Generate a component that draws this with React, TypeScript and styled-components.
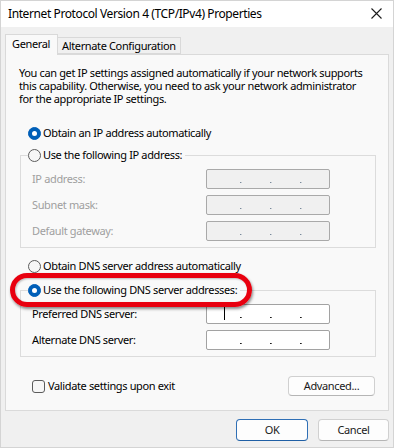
import React from "react";
import styled, { createGlobalStyle } from "styled-components";

const Global = createGlobalStyle`
  html, body { margin: 0; padding: 0; background: #f0f0f0; }
  body {
    font-family: "Segoe UI", "Noto Sans", sans-serif;
    font-size: 11px;
    letter-spacing: -0.36px;
    color: #000;
  }
  * { box-sizing: border-box; }
`;

const Window = styled.div`
  width: 394px;
  height: 448px;
  background: #f0f0f0;
  border: 1px solid #d4d4d4;
  display: flex;
  flex-direction: column;
  overflow: hidden;
`;

const TitleBar = styled.div`
  height: 26px;
  background: #ffffff;
  display: flex;
  align-items: center;
  justify-content: space-between;
  padding: 0 11px 2px 7px;
  font-size: 12px;
  letter-spacing: -0.4px;
  white-space: nowrap;
`;

const TabStrip = styled.div`
  display: flex;
  align-items: flex-end;
  margin-top: 7px;
  padding-left: 4px;
  position: relative;
  z-index: 1;
`;

const Tab = styled.div<{ $active?: boolean }>`
  height: ${(p) => (p.$active ? 21 : 17)}px;
  padding: ${(p) => (p.$active ? "2px 7px 0 6px" : "1px 4px 0 4px")};
  margin-bottom: ${(p) => (p.$active ? -1 : 0)}px;
  background: ${(p) => (p.$active ? "#f9f9f9" : "#f0f0f0")};
  border: 1px solid #d9d9d9;
  border-bottom: ${(p) => (p.$active ? "none" : "1px solid #d9d9d9")};
  ${(p) => (p.$active ? "" : "border-left: none;")}
  line-height: 14px;
  white-space: nowrap;
`;

const Panel = styled.div`
  position: relative;
  height: 357px;
  margin: 0 4px 0 4px;
  background: #f9f9f9;
  border: 1px solid #dadada;
  padding: 11px 12px 0 13px;
  display: flex;
  flex-direction: column;
`;

const Description = styled.div`
  line-height: 13px;
  white-space: nowrap;
`;

const RadioRow = styled.label<{ $mt?: number }>`
  display: flex;
  align-items: center;
  height: 14px;
  line-height: 14px;
  margin-top: ${(p) => p.$mt ?? 0}px;
  margin-left: ${(p) => (p.$mt !== undefined ? 9 : 0)}px;
  white-space: nowrap;
`;

const RadioCircle = styled.span<{ $checked?: boolean }>`
  width: 13px;
  height: 13px;
  border-radius: 50%;
  flex: none;
  margin-right: 2px;
  box-sizing: border-box;
  display: flex;
  align-items: center;
  justify-content: center;
  background: ${(p) => (p.$checked ? "#005fb8" : "#f7f7f7")};
  border: 1px solid ${(p) => (p.$checked ? "#005fb8" : "#5c5c5c")};
  &::after {
    content: "";
    display: ${(p) => (p.$checked ? "block" : "none")};
    width: 5px;
    height: 5px;
    border-radius: 50%;
    background: #ffffff;
  }
`;

const Group = styled.fieldset<{ $mt: number }>`
  margin: ${(p) => p.$mt}px 0 0 1px;
  padding: 7px 0 6px 11px;
  border: 1px solid #dcdcdc;
  min-width: 0;
`;

const Legend = styled.legend`
  padding: 0 3px 0 0;
  margin-left: -4px;
`;

const Fields = styled.div`
  display: grid;
  grid-template-columns: 174px 124px;
  row-gap: 6px;
  align-items: center;
`;

const FieldLabel = styled.span<{ $disabled?: boolean }>`
  color: ${(p) => (p.$disabled ? "#9f9f9f" : "#000")};
  line-height: 14px;
  white-space: nowrap;
`;

const IpBox = styled.div<{ $disabled?: boolean }>`
  height: 20px;
  border: 1px solid ${(p) => (p.$disabled ? "#a9a9a9" : "#a2a2a2")};
  border-radius: 2px;
  background: ${(p) => (p.$disabled ? "#f0f0f0" : "#ffffff")};
  display: grid;
  grid-template-columns: 30px 30px 30px 30px;
  padding-left: 3px;
  position: relative;
`;

const Segment = styled.span<{ $disabled?: boolean; $dot?: boolean }>`
  position: relative;
  &::after {
    content: "";
    display: ${(p) => (p.$dot ? "block" : "none")};
    position: absolute;
    right: -1px;
    bottom: 5px;
    width: 1px;
    height: 1px;
    background: ${(p) => (p.$disabled ? "#7a8a9a" : "#1a1a1a")};
    box-shadow: 1px 0 0 ${(p) => (p.$disabled ? "#c0c8d0" : "#606060")};
  }
`;

const Caret = styled.span`
  position: absolute;
  left: 14px;
  top: 2px;
  width: 1px;
  height: 13px;
  background: #000;
`;

const BottomRow = styled.div`
  display: flex;
  align-items: center;
  justify-content: space-between;
  margin: 19px 1px 0 13px;
`;

const CheckRow = styled.label`
  display: flex;
  align-items: center;
  line-height: 14px;
  white-space: nowrap;
`;

const CheckSquare = styled.span`
  width: 13px;
  height: 13px;
  border: 1px solid #5c5c5c;
  border-radius: 3px;
  background: #f7f7f7;
  margin-right: 3px;
  flex: none;
`;

const Button = styled.button<{ $primary?: boolean; $w: number }>`
  width: ${(p) => p.$w}px;
  height: ${(p) => (p.$primary !== undefined ? 22 : 20)}px;
  font-family: inherit;
  font-size: 11px;
  letter-spacing: inherit;
  color: #1a1a1a;
  background: #fdfdfd;
  border: 1px solid ${(p) => (p.$primary ? "#2f6fb5" : "#d0d0d0")};
  border-bottom-color: ${(p) => (p.$primary ? "#1f5fa5" : "#b5b5b5")};
  border-radius: 4px;
  padding: 0;
  line-height: 18px;
`;

const Footer = styled.div`
  display: flex;
  justify-content: flex-end;
  gap: 10px;
  padding: 8px 4px 0 0;
`;

const Highlight = styled.div`
  position: absolute;
  left: 4px;
  top: 218px;
  width: 242px;
  height: 34px;
  border: 5px solid #e8000f;
  border-radius: 17px;
  box-shadow: 1px 2px 3px rgba(0, 0, 0, 0.45), inset 1px 1px 2px rgba(0, 0, 0, 0.25);
  pointer-events: none;
`;

const CloseIcon = () => (
  <svg width="11" height="11" viewBox="0 0 11 11">
    <path d="M0.5 0.5 L10.5 10.5 M10.5 0.5 L0.5 10.5" stroke="#1b1b1b" strokeWidth="1.1" />
  </svg>
);

const IpField = ({ disabled, caret }: { disabled?: boolean; caret?: boolean }) => (
  <IpBox $disabled={disabled}>
    <Segment $disabled={disabled} $dot>
      {caret && <Caret />}
    </Segment>
    <Segment $disabled={disabled} $dot />
    <Segment $disabled={disabled} $dot />
    <Segment $disabled={disabled} />
  </IpBox>
);

export default function App() {
  return (
    <>
      <Global />
      <Window>
        <TitleBar>
          <span>Internet Protocol Version 4 (TCP/IPv4) Properties</span>
          <CloseIcon />
        </TitleBar>
        <TabStrip>
          <Tab $active>General</Tab>
          <Tab>Alternate Configuration</Tab>
        </TabStrip>
        <Panel>
          <Description>
            You can get IP settings assigned automatically if your network supports
            <br />
            this capability. Otherwise, you need to ask your network administrator
            <br />
            for the appropriate IP settings.
          </Description>

          <RadioRow $mt={21}>
            <RadioCircle $checked />
            Obtain an IP address automatically
          </RadioRow>

          <Group $mt={8}>
            <Legend>
              <RadioRow>
                <RadioCircle />
                Use the following IP address:
              </RadioRow>
            </Legend>
            <Fields>
              <FieldLabel $disabled>IP address:</FieldLabel>
              <IpField disabled />
              <FieldLabel $disabled>Subnet mask:</FieldLabel>
              <IpField disabled />
              <FieldLabel $disabled>Default gateway:</FieldLabel>
              <IpField disabled />
            </Fields>
          </Group>

          <RadioRow $mt={11}>
            <RadioCircle />
            Obtain DNS server address automatically
          </RadioRow>

          <Group $mt={10}>
            <Legend>
              <RadioRow>
                <RadioCircle $checked />
                Use the following DNS server addresses:
              </RadioRow>
            </Legend>
            <Fields>
              <FieldLabel>Preferred DNS server:</FieldLabel>
              <IpField caret />
              <FieldLabel>Alternate DNS server:</FieldLabel>
              <IpField />
            </Fields>
          </Group>

          <BottomRow>
            <CheckRow>
              <CheckSquare />
              Validate settings upon exit
            </CheckRow>
            <Button $w={87}>Advanced...</Button>
          </BottomRow>

          <Highlight />
        </Panel>
        <Footer>
          <Button $primary $w={72}>OK</Button>
          <Button $primary={false} $w={71}>Cancel</Button>
        </Footer>
      </Window>
    </>
  );
}
